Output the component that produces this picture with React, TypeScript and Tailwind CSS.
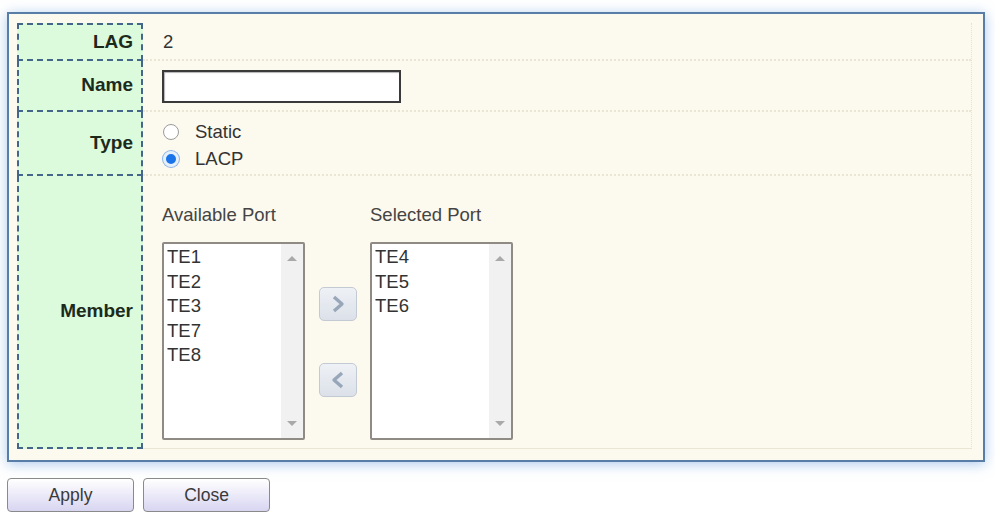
import React from 'react';

const font = { fontFamily: '"Liberation Sans", Arial, sans-serif' };

const PortList = ({ items }: { items: string[] }) => (
  <div className="flex w-[143px] h-[198px] bg-white border-2 border-[#8f8a84] rounded-[2px]">
    <div className="flex-1 pl-[3px] pt-[1px] text-[18.5px] leading-[24.5px] text-[#333]">
      {items.map((it) => (
        <div key={it}>{it}</div>
      ))}
    </div>
    <div className="w-[22px] bg-[#f1f1f1] flex flex-col items-center justify-between py-[12px]">
      <span className="w-0 h-0 border-x-[5px] border-x-transparent border-b-[5px] border-b-[#a9a9a9]" />
      <span className="w-0 h-0 border-x-[5px] border-x-transparent border-t-[5px] border-t-[#a9a9a9]" />
    </div>
  </div>
);

const MoveButton = ({ dir }: { dir: 'right' | 'left' }) => (
  <div className="w-[38px] h-[34px] rounded-[5px] border border-[#c4cad3] bg-gradient-to-b from-[#eef1f5] to-[#dce1e9] flex items-center justify-center">
    <svg width="16" height="20" viewBox="0 0 16 20">
      <path
        d={dir === 'right' ? 'M4 3 L12 10 L4 17' : 'M12 3 L4 10 L12 17'}
        fill="none"
        stroke="#98a6b9"
        strokeWidth="3.4"
        strokeLinejoin="round"
      />
    </svg>
  </div>
);

const Label = ({ text, h, first }: { text: string; h: string; first?: boolean }) => (
  <div
    className={`${h} w-[126px] shrink-0 bg-[#dcfadc] border-x-2 border-b-2 ${first ? 'border-t-2' : ''} border-dashed border-[#44668a] flex items-center justify-end pr-[8px] text-[19px] font-bold text-[#1c2a1c]`}
  >
    {text}
  </div>
);

export default function App() {
  return (
    <div className="w-[995px] h-[524px] bg-white pl-[7px] pt-[12px]" style={font}>
      <div className="w-[978px] h-[450px] border-2 border-[#587da6] bg-[#fcf9ee] pl-[8px] pt-[9px] shadow-[0_2px_12px_rgba(90,150,220,0.5)]">
        <div className="w-[955px] border-r border-dotted border-[#e7e2d0]">
          {/* LAG */}
          <div className="flex">
            <Label text="LAG" h="h-[38px]" first />
            <div className="flex-1 flex items-center pl-[20px] pt-[2px] text-[18.5px] text-[#333] border-b-2 border-dotted border-[#ebe6d4]">
              2
            </div>
          </div>
          {/* Name */}
          <div className="flex">
            <Label text="Name" h="h-[51px]" />
            <div className="flex-1 flex items-center pl-[19px] pt-[2px] border-b-2 border-dotted border-[#ebe6d4]">
              <div className="w-[239px] h-[33px] bg-white border-2 border-[#3a3a3a] shadow-[inset_1px_1px_1px_rgba(0,0,0,0.3)]" />
            </div>
          </div>
          {/* Type */}
          <div className="flex">
            <Label text="Type" h="h-[64px]" />
            <div className="flex-1 flex flex-col justify-center pl-[20px] pt-[5px] gap-[7px] text-[18.5px] leading-[20px] text-[#333] border-b-2 border-dotted border-[#ebe6d4]">
              <div className="flex items-center">
                <span className="w-[16px] h-[16px] rounded-full bg-white border border-[#9a9a9a]" />
                <span className="ml-[16px]">Static</span>
              </div>
              <div className="flex items-center">
                <span className="w-[16px] h-[16px] rounded-full bg-[#1a73e8] border-[3px] border-[#e6f0fb] ring-1 ring-[#8fb4e6]" />
                <span className="ml-[16px]">LACP</span>
              </div>
            </div>
          </div>
          {/* Member */}
          <div className="flex">
            <Label text="Member" h="h-[273px]" />
            <div className="flex-1 flex flex-col pl-[19px] pt-[28px] border-b border-[#ebe6d4]">
              <div className="flex text-[18.5px] leading-[22px] text-[#444]">
                <span className="w-[208px]">Available Port</span>
                <span>Selected Port</span>
              </div>
              <div className="flex mt-[16px]">
                <PortList items={['TE1', 'TE2', 'TE3', 'TE7', 'TE8']} />
                <div className="flex flex-col pt-[45px] gap-[42px] ml-[14px] mr-[13px]">
                  <MoveButton dir="right" />
                  <MoveButton dir="left" />
                </div>
                <PortList items={['TE4', 'TE5', 'TE6']} />
              </div>
            </div>
          </div>
        </div>
      </div>
      <div className="flex gap-[9px] mt-[16px]">
        <button className="w-[127px] h-[34px] rounded-[4px] border-[1.5px] border-[#8a8a8a] bg-gradient-to-b from-white to-[#d8d5f1] text-[17.5px] text-[#3a3a3a]">
          Apply
        </button>
        <button className="w-[127px] h-[34px] rounded-[4px] border-[1.5px] border-[#8a8a8a] bg-gradient-to-b from-white to-[#d8d5f1] text-[17.5px] text-[#3a3a3a]">
          Close
        </button>
      </div>
    </div>
  );
}
